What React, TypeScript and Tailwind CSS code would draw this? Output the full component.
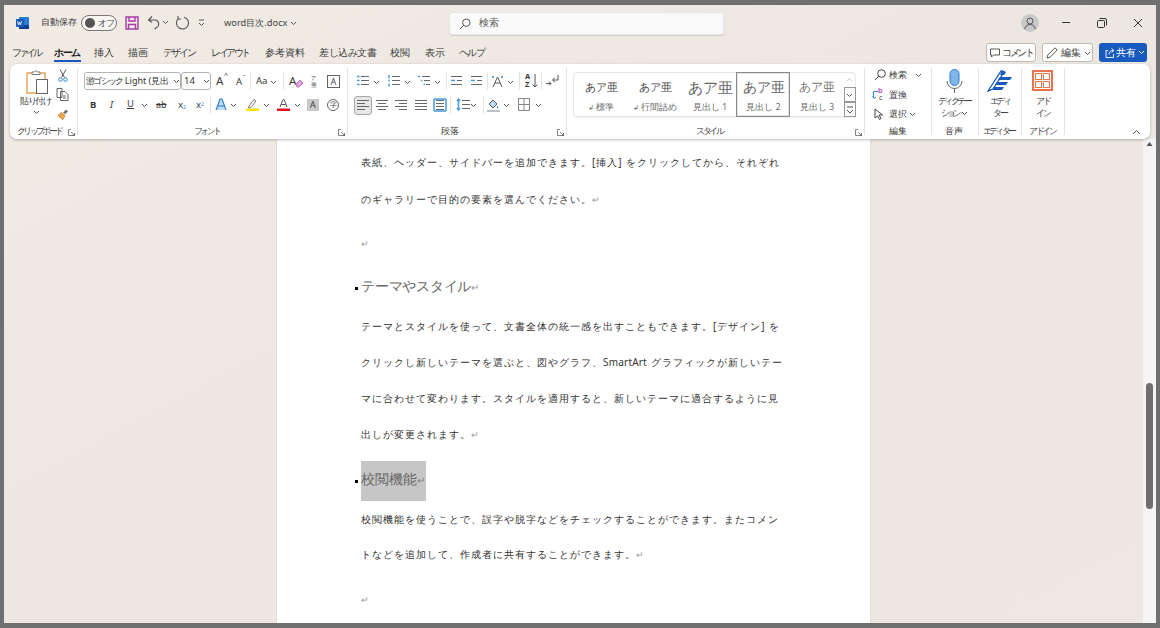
import React from "react";

const F = "[font-family:'Noto_Sans_CJK_JP','Noto_Sans',sans-serif]";

function T({ c, children }: { c: string; children: React.ReactNode }) {
  return <span className={"absolute whitespace-nowrap text-[#3b3b3b] " + c}>{children}</span>;
}
function Chev({ c, color = "#555" }: { c: string; color?: string }) {
  return (
    <svg className={"absolute w-[7px] h-[5px] " + c} viewBox="0 0 7 5" fill="none" stroke={color} strokeWidth="1">
      <path d="M1 1l2.500 2.500L6 1" />
    </svg>
  );
}
function Sep({ c }: { c: string }) {
  return <div className={"absolute w-px bg-[#e3e3e3] " + c} />;
}
function Launcher({ c }: { c: string }) {
  return (
    <svg className={"absolute w-[7px] h-[7px] " + c} viewBox="0 0 7 7" fill="none" stroke="#666" strokeWidth="0.8">
      <path d="M3 .5H.5v6h6V4M3 3l3.500 3.500M6.500 4.500v2h-2" />
    </svg>
  );
}
function Lines({ c, rows, color = "#666", dots = "" }: { c: string; rows: number[][]; color?: string; dots?: string }) {
  return (
    <svg className={"absolute w-[14px] h-[14px] " + c} viewBox="0 0 14 14" fill="none" stroke={color} strokeWidth="1">
      {rows.map((r, i) => (
        <path key={i} d={`M${r[0]} ${r[2]}.5H${r[1]}`} />
      ))}
      {dots && <path d={dots} stroke="#4a9ce0" strokeWidth="1.500" />}
    </svg>
  );
}
function Body({ c, children }: { c: string; children: React.ReactNode }) {
  return (
    <p className={"absolute left-[361px] m-0 h-[14px] leading-[14px] text-[10px] tracking-[1px] text-[#333] whitespace-nowrap " + c}>
      {children}
    </p>
  );
}
const Ret = () => <span className="text-[#9a9a9a] text-[9px] ml-[0px]">↵</span>;
const Lat = ({ children }: { children: React.ReactNode }) => <span className="tracking-[0.2px]">{children}</span>;

function StyleItem({ x, w, big, label, sub, color = "#444" }: { x: string; w: string; big: string; label: string; sub?: boolean; color?: string }) {
  return (
    <div className={"absolute top-[73px] h-[43px] flex flex-col items-center " + x + " " + w}>
      <span className={"whitespace-nowrap h-[28px] flex items-center font-light " + big} style={{ color }}>あア亜</span>
      <span className="whitespace-nowrap text-[8.500px] leading-[12px] text-[#666]">
        {sub && <span className="text-[7px]">↲ </span>}
        {label}
      </span>
    </div>
  );
}
const tab = "top-[45px] h-[15px] leading-[15px] text-[10px]";
const lab = "top-[125px] h-[12px] leading-[12px] text-[9px]";
const big1 = "top-[95px] h-[12px] leading-[12px] text-[9px]";
const big2 = "top-[107px] h-[12px] leading-[12px] text-[9px]";

export default function App() {
  return (
    <div className={"relative w-[1160px] h-[628px] overflow-hidden bg-[#6f6f6f] " + F}>
      {/* window */}
      <div className="absolute left-[4px] top-[5px] w-[1152px] h-[618px] bg-gradient-to-br from-[#f1ebe4] via-[#ece7e1] to-[#eee8e2]" />

      {/* title bar */}
      <svg className="absolute left-[16px] top-[17px] w-[13px] h-[12px]" viewBox="0 0 13 12">
        <rect x="3" y="0" width="10" height="12" rx="1" fill="#2b7cd3" />
        <rect x="3" y="8" width="10" height="4" fill="#103f91" />
        <rect x="0" y="2" width="8" height="8" rx="1" fill="#185abd" />
        <path d="M1.500 4l1 4 1-3 1 3 1-4" stroke="#fff" strokeWidth=".8" fill="none" />
      </svg>
      <T c="left-[41px] top-[16px] h-[13px] leading-[13px] text-[8.800px]">自動保存</T>
      <div className="absolute left-[81px] top-[15px] w-[36px] h-[16px] rounded-full border border-[#777] bg-[#f8f6f3]">
        <div className="absolute left-[3px] top-[2px] w-[10px] h-[10px] rounded-full bg-[#555]" />
        <span className="absolute left-[16px] top-0 h-[14px] leading-[14px] text-[8.500px] tracking-[-1.500px] text-[#444] whitespace-nowrap">オフ</span>
      </div>
      <svg className="absolute left-[125px] top-[16px] w-[14px] h-[14px]" viewBox="0 0 14 14" fill="none" stroke="#a839a8" strokeWidth="1.400">
        <path d="M1 1h12v12H1z" />
        <path d="M4 1v4h6V1M3.500 13V8.500h7V13" />
      </svg>
      <svg className="absolute left-[147px] top-[15px] w-[14px] h-[15px]" viewBox="0 0 14 15" fill="none" stroke="#555" strokeWidth="1.100">
        <path d="M5 1.500L1.500 5 5 7.500M1.500 5h7a4 4 0 0 1 1 7.500l-2 1.500" />
      </svg>
      <Chev c="left-[162px] top-[20px]" />
      <svg className="absolute left-[175px] top-[15px] w-[14px] h-[15px]" viewBox="0 0 14 15" fill="none" stroke="#555" strokeWidth="1.100">
        <path d="M9 2.200A6 6 0 1 1 3.500 3.500M3 1v3h3" />
      </svg>
      <svg className="absolute left-[198px] top-[19px] w-[7px] h-[8px]" viewBox="0 0 7 8" fill="none" stroke="#555" strokeWidth="1">
        <path d="M1 1h5M1 4l2.500 2.500L6 4" />
      </svg>
      <T c="left-[224px] top-[16px] h-[14px] leading-[14px] text-[9.300px] text-[#444]">word目次.docx</T>
      <Chev c="left-[290px] top-[21px]" />

      {/* search */}
      <div className="absolute left-[449px] top-[12px] w-[275px] h-[23px] rounded-[3px] bg-[#fafafa] border border-[#e9e6e2] shadow-[0_1px_1px_rgba(0,0,0,0.12)]">
        <svg className="absolute left-[9px] top-[5px] w-[12px] h-[12px]" viewBox="0 0 12 12" fill="none" stroke="#555" strokeWidth="1">
          <circle cx="7.300" cy="4.700" r="3.700" />
          <path d="M4.600 7.400L1 11" />
        </svg>
        <span className="absolute left-[29px] top-[3px] h-[14px] leading-[14px] text-[9.800px] text-[#555]">検索</span>
      </div>

      {/* window controls */}
      <div className="absolute left-[1021px] top-[14px] w-[18px] h-[18px] rounded-full bg-[#c9c9c9] overflow-hidden">
        <svg className="w-[18px] h-[18px]" viewBox="0 0 18 18" fill="none" stroke="#555" strokeWidth="1">
          <circle cx="9" cy="7" r="3" />
          <path d="M3.800 15c.4-3 2.500-4.500 5.200-4.500s4.800 1.500 5.200 4.500" />
        </svg>
      </div>
      <div className="absolute left-[1062px] top-[22px] w-[8px] h-px bg-[#333]" />
      <svg className="absolute left-[1097px] top-[18px] w-[10px] h-[10px]" viewBox="0 0 10 10" fill="none" stroke="#333" strokeWidth="1">
        <rect x=".5" y="2.500" width="7" height="7" rx="1" />
        <path d="M2.500 .5H8a1.500 1.500 0 0 1 1.500 1.500V7.500" />
      </svg>
      <svg className="absolute left-[1133px] top-[18px] w-[10px] h-[10px]" viewBox="0 0 10 10" stroke="#333" strokeWidth="1">
        <path d="M1 1l8 8M9 1l-8 8" />
      </svg>

      {/* tabs */}
      <nav>
        <T c={"left-[12px] tracking-[-3px] " + tab}>ファイル</T>
        <T c={"left-[54px] tracking-[-1.300px] font-bold text-[#222] " + tab}>ホーム</T>
        <div className="absolute left-[54px] top-[60px] w-[27px] h-[2px] bg-[#185abd]" />
        <T c={"left-[94px] " + tab}>挿入</T>
        <T c={"left-[128px] " + tab}>描画</T>
        <T c={"left-[163px] tracking-[-2px] " + tab}>デザイン</T>
        <T c={"left-[211px] tracking-[-2.400px] " + tab}>レイアウト</T>
        <T c={"left-[265px] " + tab}>参考資料</T>
        <T c={"left-[319px] tracking-[-0.500px] " + tab}>差し込み文書</T>
        <T c={"left-[390px] " + tab}>校閲</T>
        <T c={"left-[425px] " + tab}>表示</T>
        <T c={"left-[459px] tracking-[-1.700px] " + tab}>ヘルプ</T>
      </nav>

      {/* right buttons */}
      <div className="absolute left-[986px] top-[43px] w-[50px] h-[19px] rounded-[3px] border border-[#bdbab6] bg-[#fdfdfc] flex items-center pl-[3px] gap-[2px]">
        <svg className="w-[10px] h-[10px] shrink-0" viewBox="0 0 10 10" fill="none" stroke="#444" strokeWidth=".9">
          <path d="M.5 1h9v6H3.500L1.500 9V7H.5z" />
        </svg>
        <span className="text-[10px] tracking-[-2.500px] text-[#444] whitespace-nowrap">コメント</span>
      </div>
      <div className="absolute left-[1042px] top-[43px] w-[51px] h-[19px] rounded-[3px] border border-[#bdbab6] bg-[#fdfdfc] flex items-center pl-[3px] gap-[3px]">
        <svg className="w-[12px] h-[12px] shrink-0" viewBox="0 0 12 12" fill="none" stroke="#444" strokeWidth=".9">
          <path d="M1 11l.8-3L9 .8 11.200 3 4 10.200z" />
        </svg>
        <span className="text-[10px] text-[#444] whitespace-nowrap">編集</span>
        <Chev c="left-[41px] top-[7px]" />
      </div>
      <div className="absolute left-[1099px] top-[43px] w-[48px] h-[19px] rounded-[3px] bg-[#185abd] flex items-center pl-[6px] gap-[1px]">
        <svg className="w-[10px] h-[11px] shrink-0" viewBox="0 0 10 11" fill="none" stroke="#fff" strokeWidth=".9">
          <path d="M3 3.500H1v7h7.500V7M4 7.500C4 5 5.500 3.500 8 3.500M6.500 1.500L9 3.500 6.500 5.500" />
        </svg>
        <span className="text-[10px] text-white whitespace-nowrap">共有</span>
        <Chev c="left-[39px] top-[7px]" color="#fff" />
      </div>

      {/* document */}
      <div className="absolute left-[276px] top-[139px] w-[595px] h-[484px] bg-white border-x border-[#e2dfda]" />
      <div className="absolute left-[1143px] top-[139px] w-[13px] h-[484px] bg-[#f5f5f5]" />
      <svg className="absolute left-[1146px] top-[141px] w-[7px] h-[6px]" viewBox="0 0 7 6" fill="#555">
        <path d="M3.500 1L6.500 5H.5z" />
      </svg>
      <div className="absolute left-[1146px] top-[383px] w-[7px] h-[126px] rounded-full bg-[#6f6f6f]" />

      <main>
        <Body c="top-[155px]">表紙、ヘッダー、サイドバーを追加できます。[挿入] をクリックしてから、それぞれ</Body>
        <Body c="top-[192px]">のギャラリーで目的の要素を選んでください。<Ret /></Body>
        <Body c="top-[236px]"><Ret /></Body>
        <div className="absolute left-[355px] top-[287px] w-[3px] h-[3px] bg-black" />
        <p className="absolute left-[361px] top-[277px] m-0 h-[18px] leading-[18px] text-[13.500px] tracking-[-0.250px] font-light text-[#666] whitespace-nowrap">テーマやスタイル<span className="text-[10px] text-[#999]">↵</span></p>
        <Body c="top-[319px]">テーマとスタイルを使って、文書全体の統一感を出すこともできます。[デザイン] を</Body>
        <Body c="top-[355px]">クリックし新しいテーマを選ぶと、図やグラフ、<Lat>SmartArt</Lat> グラフィックが新しいテー</Body>
        <Body c="top-[391px]">マに合わせて変わります。スタイルを適用すると、新しいテーマに適合するように見</Body>
        <Body c="top-[427px]">出しが変更されます。<Ret /></Body>
        <div className="absolute left-[361px] top-[461px] w-[65px] h-[40px] bg-[#c6c6c6]" />
        <div className="absolute left-[355px] top-[480px] w-[3px] h-[3px] bg-black" />
        <p className="absolute left-[361px] top-[470px] m-0 h-[18px] leading-[18px] text-[13.500px] font-light text-[#666] whitespace-nowrap">校閲機能<span className="text-[10px] text-[#888]">↵</span></p>
        <Body c="top-[512px]">校閲機能を使うことで、誤字や脱字などをチェックすることができます。またコメン</Body>
        <Body c="top-[547px]">トなどを追加して、作成者に共有することができます。<Ret /></Body>
        <Body c="top-[592px]"><Ret /></Body>
      </main>

      {/* ribbon */}
      <div className="absolute left-[10px] top-[64px] w-[1140px] h-[75px] rounded-[7px] bg-white shadow-[0_1px_3px_rgba(0,0,0,0.25)]" />
      <Sep c="left-[77px] top-[68px] h-[67px]" />
      <Sep c="left-[347px] top-[68px] h-[67px]" />
      <Sep c="left-[566px] top-[68px] h-[67px]" />
      <Sep c="left-[864px] top-[68px] h-[67px]" />
      <Sep c="left-[931px] top-[68px] h-[67px]" />
      <Sep c="left-[978px] top-[68px] h-[67px]" />
      <Sep c="left-[1021px] top-[68px] h-[67px]" />
      <Sep c="left-[1064px] top-[68px] h-[67px]" />

      {/* clipboard */}
      <svg className="absolute left-[26px] top-[70px] w-[23px] h-[24px]" viewBox="0 0 23 24" fill="none">
        <path d="M1 3h18v20H1z" stroke="#e8a254" strokeWidth="1.400" />
        <path d="M6 3.500V2h2.500l1.500-1.500L11.500 2H14v2.500H6z" fill="#fff" stroke="#777" />
        <rect x="10.500" y="9.500" width="11" height="14" fill="#fff" stroke="#666" />
      </svg>
      <T c={"left-[20px] tracking-[-1.500px] " + big1}>貼り付け</T>
      <Chev c="left-[33px] top-[110px]" />
      <svg className="absolute left-[57px] top-[69px] w-[12px] h-[13px]" viewBox="0 0 12 13" fill="none">
        <path d="M3 .5l4.500 8M9 .5L4.500 8.500" stroke="#555" />
        <circle cx="3.500" cy="10.500" r="1.800" stroke="#2f86d1" />
        <circle cx="8.500" cy="10.500" r="1.800" stroke="#2f86d1" />
      </svg>
      <svg className="absolute left-[56px] top-[88px] w-[13px] h-[13px]" viewBox="0 0 13 13" fill="none" stroke="#555" strokeWidth=".9">
        <path d="M1 .5h5v9H1zM4.500 3.500H9l3 3v6H4.500z" fill="#fff" />
        <path d="M7 8h3M7 10h3" />
      </svg>
      <svg className="absolute left-[57px] top-[107px] w-[13px] h-[13px]" viewBox="0 0 13 13" fill="none">
        <path d="M1 8.500l3.500-3 3.500 3.500-2.500 3.500z" fill="#f0a64a" stroke="#d98a2b" />
        <path d="M6 5.500l3-3 2 2-3 3z" fill="#777" />
      </svg>
      <T c={"left-[17px] tracking-[-2.700px] " + lab}>クリップボード</T>
      <Launcher c="left-[68px] top-[129px]" />

      {/* font */}
      <div className="absolute left-[84px] top-[72px] w-[97px] h-[18px] rounded-[3px] border border-[#b5b5b5] overflow-hidden">
        <span className="absolute left-[1px] top-[1px] h-[14px] leading-[14px] text-[9px] text-[#333] whitespace-nowrap"><span className="tracking-[-1.700px]">游ゴシック</span> Light (見出</span>
      </div>
      <Chev c="left-[173px] top-[79px]" />
      <div className="absolute left-[181px] top-[72px] w-[30px] h-[18px] rounded-[3px] border border-[#b5b5b5]">
        <span className="absolute left-[2px] top-[1px] h-[14px] leading-[14px] text-[9.500px] text-[#333]">14</span>
      </div>
      <Chev c="left-[203px] top-[79px]" />
      <T c="left-[216px] top-[73px] h-[15px] leading-[15px] text-[11.500px]">A</T>
      <T c="left-[224px] top-[72px] h-[8px] leading-[8px] text-[7px] text-[#2f86d1]">^</T>
      <T c="left-[236px] top-[75px] h-[13px] leading-[13px] text-[9.500px]">A</T>
      <T c="left-[243px] top-[73px] h-[8px] leading-[8px] text-[6px] text-[#2f86d1]">ˇ</T>
      <Sep c="left-[250px] top-[72px] h-[18px]" />
      <T c="left-[256px] top-[74px] h-[14px] leading-[14px] text-[9.500px]">Aa</T>
      <Chev c="left-[270px] top-[80px]" />
      <Sep c="left-[283px] top-[72px] h-[18px]" />
      <T c="left-[289px] top-[73px] h-[15px] leading-[15px] text-[11.500px]">A</T>
      <svg className="absolute left-[295px] top-[79px] w-[9px] h-[9px]" viewBox="0 0 9 9">
        <path d="M1 5l4-4 3 3-4 4H2z" fill="#e3a6dc" stroke="#b04bb0" strokeWidth=".7" />
      </svg>
      <T c="left-[311px] top-[75px] h-[7px] leading-[7px] text-[5px]">ア</T>
      <T c="left-[311px] top-[82px] h-[7px] leading-[7px] text-[5.500px]">亜</T>
      <div className="absolute left-[327px] top-[75px] w-[13px] h-[13px] border border-[#666] flex items-center justify-center text-[9px] text-[#444]">A</div>

      <T c="left-[90px] top-[98px] h-[14px] leading-[14px] text-[9.500px] font-bold">B</T>
      <T c="left-[110px] top-[98px] h-[14px] leading-[14px] text-[9.500px] italic [font-family:'Liberation_Serif',serif]">I</T>
      <T c="left-[127px] top-[97px] h-[14px] leading-[14px] text-[9.500px] underline">U</T>
      <Chev c="left-[141px] top-[103px]" />
      <T c="left-[156px] top-[98px] h-[14px] leading-[14px] text-[9px] line-through">ab</T>
      <T c="left-[178px] top-[98px] h-[14px] leading-[14px] text-[9.500px]">x<sub className="text-[5px] text-[#2f86d1]">2</sub></T>
      <T c="left-[196px] top-[98px] h-[14px] leading-[14px] text-[9.500px]">x<sup className="text-[5px] text-[#2f86d1]">2</sup></T>
      <Sep c="left-[210px] top-[96px] h-[18px]" />
      <svg className="absolute left-[215px] top-[98px] w-[12px] h-[13px]" viewBox="0 0 12 13" fill="#bcdcf5" stroke="#2b7cd3" strokeWidth="1.100">
        <path d="M1 12L5 1h2l4 11M3 8h6" />
      </svg>
      <Chev c="left-[230px] top-[103px]" />
      <svg className="absolute left-[246px] top-[98px] w-[13px] h-[13px]" viewBox="0 0 13 13">
        <path d="M3 8l5-6.500 2 1.500-5 6.500-2.500.5z" fill="#fff" stroke="#666" strokeWidth=".9" />
        <rect x="0" y="10.500" width="13" height="2.500" fill="#ffe600" />
      </svg>
      <Chev c="left-[263px] top-[103px]" />
      <svg className="absolute left-[277px] top-[98px] w-[13px] h-[13px]" viewBox="0 0 13 13">
        <path d="M3 9L6 1.500h1L10 9M4.200 6.500h4.600" fill="none" stroke="#555" />
        <rect x="0" y="10.500" width="13" height="2.500" fill="#e81123" />
      </svg>
      <Chev c="left-[294px] top-[103px]" />
      <div className="absolute left-[307px] top-[99px] w-[12px] h-[12px] bg-[#c9c9c9] flex items-center justify-center text-[9px] text-[#444]">A</div>
      <div className="absolute left-[327px] top-[99px] w-[12px] h-[12px] rounded-full border border-[#666] flex items-center justify-center text-[7px] text-[#444]">字</div>
      <T c={"left-[194px] tracking-[-2.750px] " + lab}>フォント</T>
      <Launcher c="left-[338px] top-[129px]" />

      {/* paragraph */}
      <Lines c="left-[356px] top-[74px]" rows={[[5, 13, 2], [5, 13, 6], [5, 13, 10]]} dots="M1 2.500h2.500M1 6.500h2.500M1 10.500h2.500" />
      <Chev c="left-[373px] top-[80px]" />
      <Lines c="left-[387px] top-[74px]" rows={[[5, 13, 2], [5, 13, 6], [5, 13, 10]]} dots="M2 1v3M2 5.500v2M2 9.500v3" />
      <Chev c="left-[404px] top-[80px]" />
      <Lines c="left-[418px] top-[74px]" rows={[[4, 12, 2], [6, 12, 6], [8, 12, 10]]} dots="M0 2.500h2M3 6.500h1.500M5.500 10.500h1.500" />
      <Chev c="left-[434px] top-[80px]" />
      <Sep c="left-[446px] top-[72px] h-[18px]" />
      <Lines c="left-[450px] top-[74px]" rows={[[1, 12, 2], [7, 12, 6], [1, 12, 10]]} dots="M1 6.500h4" />
      <Lines c="left-[470px] top-[74px]" rows={[[1, 12, 2], [7, 12, 6], [1, 12, 10]]} dots="M1 6.500h4" />
      <Sep c="left-[487px] top-[72px] h-[18px]" />
      <svg className="absolute left-[491px] top-[74px] w-[13px] h-[14px]" viewBox="0 0 13 14" fill="none" stroke="#555">
        <path d="M2 13L6.500 3 11 13M4 9h5" />
        <path d="M1 3h2M10 3h2" stroke="#2f86d1" strokeWidth="1.500" />
      </svg>
      <Chev c="left-[507px] top-[80px]" />
      <Sep c="left-[519px] top-[72px] h-[18px]" />
      <T c="left-[525px] top-[72px] h-[8px] leading-[8px] text-[7.500px] font-bold text-[#2f86d1]">A</T>
      <T c="left-[525px] top-[80px] h-[8px] leading-[8px] text-[7.500px] font-bold">Z</T>
      <svg className="absolute left-[532px] top-[74px] w-[6px] h-[14px]" viewBox="0 0 6 14" fill="none" stroke="#555">
        <path d="M3 0v13M.5 10.500L3 13l2.500-2.500" />
      </svg>
      <Sep c="left-[541px] top-[72px] h-[18px]" />
      <svg className="absolute left-[545px] top-[74px] w-[14px] h-[14px]" viewBox="0 0 14 14" fill="none" stroke="#555">
        <path d="M13 1v5H8M10 3.500L7.500 6 10 8.500" />
        <path d="M1 9.500h5M4 7.500l2 2-2 2" />
      </svg>

      <div className="absolute left-[354px] top-[96px] w-[18px] h-[19px] rounded-[3px] bg-[#e6e6e6] border border-[#a8a8a8]" />
      <Lines c="left-[356px] top-[98px]" rows={[[1, 13, 2], [1, 9, 5], [1, 13, 8], [1, 9, 11]]} />
      <Lines c="left-[375px] top-[98px]" rows={[[1, 13, 2], [3, 11, 5], [1, 13, 8], [3, 11, 11]]} />
      <Lines c="left-[394px] top-[98px]" rows={[[1, 13, 2], [5, 13, 5], [1, 13, 8], [5, 13, 11]]} />
      <Lines c="left-[414px] top-[98px]" rows={[[1, 13, 2], [1, 13, 5], [1, 13, 8], [1, 13, 11]]} />
      <Lines c="left-[433px] top-[98px]" rows={[[3, 11, 2], [3, 11, 5], [3, 11, 8], [3, 11, 11]]} dots="M1 1v12M13 1v12M1 1h12M1 13h12" />
      <Sep c="left-[450px] top-[96px] h-[18px]" />
      <Lines c="left-[456px] top-[98px]" rows={[[6, 14, 2], [6, 14, 6], [6, 14, 10]]} dots="M2.500 1v11M1 3l1.500-2L4 3M1 10l1.500 2L4 10" />
      <Chev c="left-[470px] top-[103px]" />
      <Sep c="left-[483px] top-[96px] h-[18px]" />
      <svg className="absolute left-[487px] top-[98px] w-[13px] h-[14px]" viewBox="0 0 13 14" fill="none">
        <path d="M2 6l4-4 4 4-4 4z" fill="#bcdcf5" stroke="#555" />
        <path d="M10 7.500l1.500 2-1.500 1z" fill="#2f86d1" />
        <path d="M0 13h13" stroke="#aaa" strokeWidth="1.500" />
      </svg>
      <Chev c="left-[503px] top-[103px]" />
      <svg className="absolute left-[518px] top-[98px] w-[12px] h-[13px]" viewBox="0 0 12 13" fill="none" stroke="#888">
        <path d="M.5 .5h11v12H.5zM6 .5v12M.5 6.500h11" />
      </svg>
      <Chev c="left-[535px] top-[103px]" />
      <T c="left-[441px] top-[125px] h-[12px] leading-[12px] text-[8.800px]">段落</T>
      <Launcher c="left-[557px] top-[129px]" />

      {/* styles */}
      <div className="absolute left-[573px] top-[72px] w-[283px] h-[45px] rounded-[4px] border border-[#e6e6e6] shadow-[0_1px_1px_rgba(0,0,0,0.06)]" />
      <StyleItem x="left-[578px]" w="w-[46px]" big="text-[11px]" label="標準" sub />
      <StyleItem x="left-[632px]" w="w-[46px]" big="text-[11px]" label="行間詰め" sub />
      <StyleItem x="left-[684px]" w="w-[52px]" big="text-[15px]" label="見出し 1" color="#666" />
      <div className="absolute left-[736px] top-[72px] w-[54px] h-[45px] border border-[#8a8a8a] shadow-[inset_0_0_0_1px_#e3e3e3]" />
      <StyleItem x="left-[737px]" w="w-[53px]" big="text-[13.500px]" label="見出し 2" color="#666" />
      <StyleItem x="left-[791px]" w="w-[52px]" big="text-[11.500px]" label="見出し 3" color="#777" />
      <div className="absolute left-[844px] top-[87px] w-[12px] h-[15px] border border-[#999] bg-white" />
      <div className="absolute left-[844px] top-[102px] w-[12px] h-[15px] border border-[#999] bg-white" />
      <Chev c="left-[846px] top-[77px] rotate-180" color="#c5c5c5" />
      <Chev c="left-[846px] top-[93px]" />
      <svg className="absolute left-[846px] top-[106px] w-[8px] h-[8px]" viewBox="0 0 8 8" fill="none" stroke="#555">
        <path d="M1 1h6M1 4l3 3 3-3" />
      </svg>
      <T c={"left-[696px] tracking-[-2.500px] " + lab}>スタイル</T>
      <Launcher c="left-[855px] top-[129px]" />

      {/* editing */}
      <svg className="absolute left-[874px] top-[69px] w-[12px] h-[12px]" viewBox="0 0 12 12" fill="none" stroke="#444">
        <circle cx="7.500" cy="4.500" r="3.800" />
        <path d="M4.800 7.200L1 11" />
      </svg>
      <T c="left-[889px] top-[69px] h-[13px] leading-[13px] text-[8.800px]">検索</T>
      <Chev c="left-[915px] top-[73px]" />
      <T c="left-[878px] top-[87px] h-[7px] leading-[7px] text-[7px] font-bold text-[#c159c1]">b</T>
      <T c="left-[879px] top-[94px] h-[7px] leading-[7px] text-[7px] text-[#2b7cd3]">c</T>
      <svg className="absolute left-[872px] top-[91px] w-[7px] h-[9px]" viewBox="0 0 7 9" fill="none" stroke="#2f86d1">
        <path d="M6 .5H1.500V7M.5 5.500L2 7.500 4 6" />
      </svg>
      <T c="left-[889px] top-[89px] h-[13px] leading-[13px] text-[8.800px]">置換</T>
      <svg className="absolute left-[874px] top-[108px] w-[10px] h-[12px]" viewBox="0 0 10 12" fill="#fff" stroke="#444">
        <path d="M1 1v9l2.500-2 2 3.500 1.500-1L5 7h3.500z" />
      </svg>
      <T c="left-[889px] top-[108px] h-[13px] leading-[13px] text-[8.800px]">選択</T>
      <Chev c="left-[909px] top-[112px]" />
      <T c="left-[889px] top-[125px] h-[12px] leading-[12px] text-[8.800px]">編集</T>

      {/* dictation */}
      <svg className="absolute left-[946px] top-[69px] w-[17px] h-[24px]" viewBox="0 0 17 24" fill="none">
        <rect x="4" y="0.500" width="9" height="16" rx="4.500" fill="#7fb8e8" stroke="#2b7cd3" />
        <path d="M1 12a7.500 7.500 0 0 0 15 0M8.500 19.500V24" stroke="#666" />
      </svg>
      <T c={"left-[938px] tracking-[-2.600px] " + big1}>ディクテー</T>
      <T c={"left-[941px] tracking-[-3px] " + big2}>ション</T>
      <Chev c="left-[961px] top-[111px]" />
      <T c="left-[945px] top-[125px] h-[12px] leading-[12px] text-[8.800px]">音声</T>

      {/* editor */}
      <svg className="absolute left-[987px] top-[69px] w-[25px] h-[23px]" viewBox="0 0 25 23" fill="none">
        <path d="M1 22L14 2l3 1L6 20z" fill="#fff" stroke="#185abd" strokeWidth="1.300" />
        <path d="M15 1l4 2-2 3h-4zM13 8h12l-2 3H11zM10 13h11l-2 3H8zM7 18h10l-2 3H5z" fill="#185abd" />
      </svg>
      <T c={"left-[990px] tracking-[-2.700px] " + big1}>エディ</T>
      <T c={"left-[993px] tracking-[-2.500px] " + big2}>ター</T>
      <T c={"left-[983px] tracking-[-2.800px] " + lab}>エディター</T>

      {/* add-in */}
      <div className="absolute left-[1032px] top-[70px] w-[21px] h-[21px] border-2 border-[#e8734a] p-[1px] grid grid-cols-2 gap-[1px]">
        <div className="border border-[#e8734a]" />
        <div className="border border-[#e8734a]" />
        <div className="border border-[#e8734a]" />
        <div className="border border-[#e8734a]" />
      </div>
      <T c={"left-[1036px] tracking-[-2.500px] " + big1}>アド</T>
      <T c={"left-[1036px] tracking-[-2.500px] " + big2}>イン</T>
      <T c={"left-[1029px] tracking-[-2.500px] " + lab}>アドイン</T>
      <svg className="absolute left-[1132px] top-[129px] w-[9px] h-[6px]" viewBox="0 0 9 6" fill="none" stroke="#555">
        <path d="M1 5l3.500-3.500L8 5" />
      </svg>
    </div>
  );
}
